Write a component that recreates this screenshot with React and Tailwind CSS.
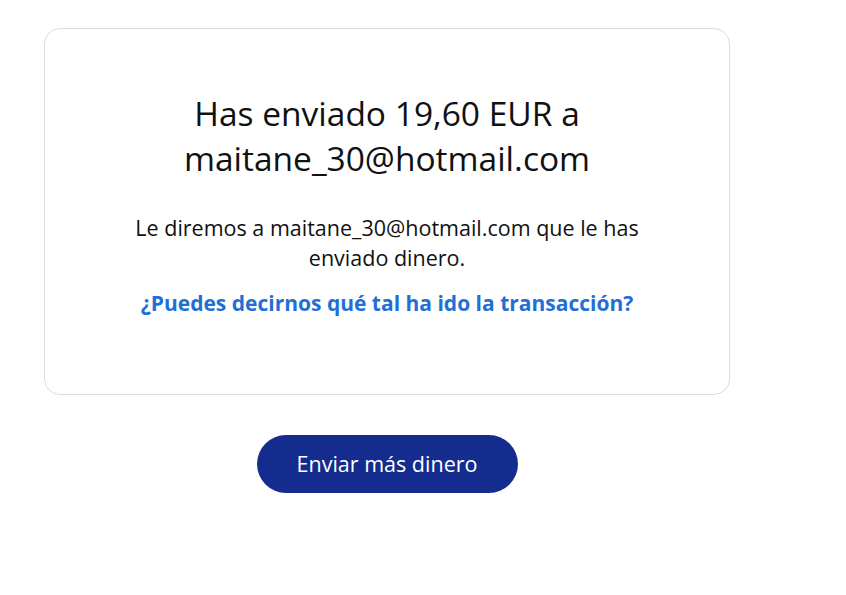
export default function App() {
  return (
    <div className="min-h-screen bg-white font-['Open_Sans',sans-serif] text-[#111]">
      <div className="ml-[44px] w-[686px] pt-[28px] flex flex-col items-center">
        {/* tarjeta de confirmación */}
        <div className="w-full rounded-[16px] border border-[#dcdcdc] pt-[62px] pb-[76px] flex flex-col items-center text-center">
          <h1 className="text-[33.5px] leading-[45px] font-normal max-w-[540px]">
            Has enviado 19,60 EUR a maitane_30@hotmail.com
          </h1>
          <p className="mt-[32px] text-[21.5px] leading-[30px] max-w-[540px]">
            Le diremos a maitane_30@hotmail.com que le has enviado dinero.
          </p>
          <a href="#" className="mt-[15px] text-[21px] leading-[30px] font-bold text-[#1f6fd6]">
            ¿Puedes decirnos qué tal ha ido la transacción?
          </a>
        </div>

        <button className="mt-[40px] h-[58px] w-[261px] rounded-full bg-[#142c8e] text-white text-[21.5px] font-medium">
          Enviar más dinero
        </button>
      </div>
    </div>
  );
}
